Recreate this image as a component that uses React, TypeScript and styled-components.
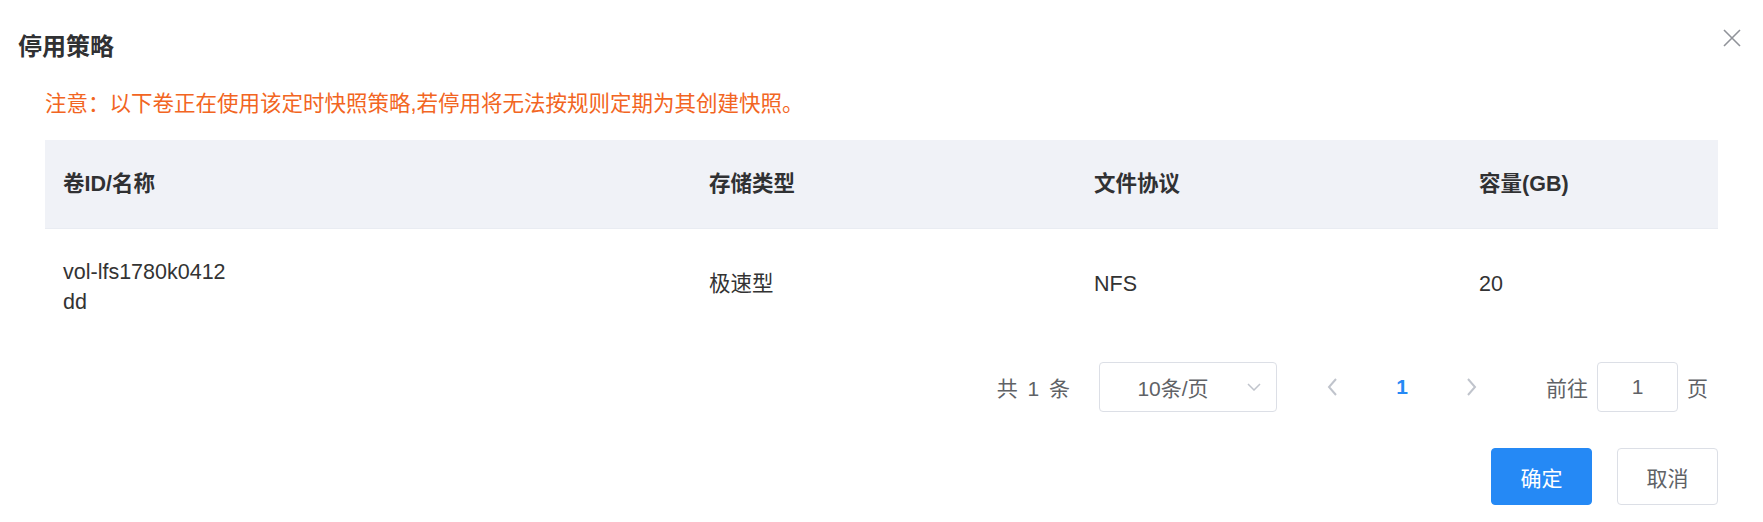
import styled, { createGlobalStyle } from "styled-components";

const GlobalStyle = createGlobalStyle`
  html, body {
    margin: 0;
    background: #fff;
  }
  body {
    font-family: "Liberation Sans", "Noto Sans CJK SC", sans-serif;
    color: #303133;
  }
`;

const Dialog = styled.div`
  position: relative;
  width: 1763px;
  height: 522px;
  box-sizing: border-box;
  background: #fff;
`;

const Header = styled.div`
  padding: 32px 18px 0;
`;

const Title = styled.h2`
  margin: 0;
  font-size: 24px;
  line-height: 30px;
  font-weight: bold;
  color: #303133;
`;

const CloseButton = styled.button`
  position: absolute;
  top: 29px;
  right: 22px;
  width: 18px;
  height: 18px;
  padding: 0;
  border: 0;
  background: none;
  cursor: pointer;
  display: flex;
`;

const Body = styled.div`
  padding: 0 45px;
`;

const Warning = styled.p`
  margin: 27px 0 0;
  font-size: 21.5px;
  line-height: 30px;
  color: #f26522;
`;

const Table = styled.div`
  margin-top: 21px;
`;

const Row = styled.div<{ $head?: boolean }>`
  display: grid;
  grid-template-columns: 646fr 385fr 385fr 257fr;
  align-items: center;
  height: ${(p) => (p.$head ? "88px" : "110px")};
  background: ${(p) => (p.$head ? "#f0f2f7" : "#fff")};
  border-bottom: ${(p) => (p.$head ? "1px solid #e9ecf2" : "none")};
  font-weight: ${(p) => (p.$head ? "bold" : "normal")};
  color: ${(p) => (p.$head ? "#303133" : "#333")};
`;

const Cell = styled.div<{ $multi?: boolean }>`
  padding: ${(p) => (p.$multi ? "5px 18px 0" : "0 18px")};
  font-size: 21.5px;
  line-height: 30px;
`;

const Pagination = styled.div`
  display: flex;
  justify-content: flex-end;
  align-items: center;
  height: 50px;
  margin-top: 23px;
  padding-right: 10px;
  font-size: 21px;
  color: #606266;
`;

const Total = styled.span`
  margin-right: 29px;
  word-spacing: 4px;
`;

const SizeSelect = styled.div`
  position: relative;
  display: flex;
  align-items: center;
  justify-content: center;
  width: 178px;
  height: 50px;
  box-sizing: border-box;
  padding-right: 30px;
  border: 1px solid #dcdfe6;
  border-radius: 4px;
  margin-right: 31px;
  color: #606266;
`;

const SelectArrow = styled.svg`
  position: absolute;
  right: 15px;
  top: 50%;
  margin-top: -4px;
`;

const Pager = styled.div`
  display: flex;
  gap: 22px;
`;

const PagerButton = styled.div<{ $active?: boolean }>`
  width: 48px;
  height: 50px;
  display: flex;
  align-items: center;
  justify-content: center;
  font-weight: bold;
  color: ${(p) => (p.$active ? "#2589f5" : "#c0c4cc")};
`;

const Jumper = styled.div`
  display: flex;
  align-items: center;
  gap: 9px;
  margin-left: 50px;
`;

const JumpInput = styled.div`
  width: 81px;
  height: 50px;
  box-sizing: border-box;
  border: 1px solid #dcdfe6;
  border-radius: 4px;
  display: flex;
  align-items: center;
  justify-content: center;
  color: #606266;
`;

const Footer = styled.div`
  display: flex;
  justify-content: flex-end;
  gap: 25px;
  margin-top: 36px;
`;

const Button = styled.button<{ $primary?: boolean }>`
  width: 101px;
  height: 57px;
  box-sizing: border-box;
  border-radius: 4px;
  border: 1px solid ${(p) => (p.$primary ? "#2589f5" : "#dcdfe6")};
  background: ${(p) => (p.$primary ? "#2589f5" : "#fff")};
  color: ${(p) => (p.$primary ? "#fff" : "#606266")};
  font-family: inherit;
  font-size: 21px;
  cursor: pointer;
`;

const Chevron = ({ dir }: { dir: "left" | "right" }) => (
  <svg width="12" height="20" viewBox="0 0 12 20">
    <polyline
      points={dir === "left" ? "10,2 3,10 10,18" : "2,2 9,10 2,18"}
      fill="none"
      stroke="#c0c4cc"
      strokeWidth="2"
    />
  </svg>
);

const columns = ["卷ID/名称", "存储类型", "文件协议", "容量(GB)"];

const rows = [
  { id: "vol-lfs1780k0412", name: "dd", type: "极速型", protocol: "NFS", size: "20" },
];

export default function App() {
  return (
    <Dialog>
      <GlobalStyle />
      <Header>
        <Title>停用策略</Title>
      </Header>
      <CloseButton aria-label="close">
        <svg width="18" height="18" viewBox="0 0 18 18">
          <path d="M1 1L17 17M17 1L1 17" stroke="#909399" strokeWidth="1.6" />
        </svg>
      </CloseButton>
      <Body>
        <Warning>注意：以下卷正在使用该定时快照策略,若停用将无法按规则定期为其创建快照。</Warning>
        <Table>
          <Row $head>
            {columns.map((c) => (
              <Cell key={c}>{c}</Cell>
            ))}
          </Row>
          {rows.map((r) => (
            <Row key={r.id}>
              <Cell $multi>
                {r.id}
                <br />
                {r.name}
              </Cell>
              <Cell>{r.type}</Cell>
              <Cell>{r.protocol}</Cell>
              <Cell>{r.size}</Cell>
            </Row>
          ))}
        </Table>
        <Pagination>
          <Total>共 1 条</Total>
          <SizeSelect>
            10条/页
            <SelectArrow width="14" height="8" viewBox="0 0 14 8">
              <polyline points="1,1 7,7 13,1" fill="none" stroke="#c0c4cc" strokeWidth="1.5" />
            </SelectArrow>
          </SizeSelect>
          <Pager>
            <PagerButton>
              <Chevron dir="left" />
            </PagerButton>
            <PagerButton $active>1</PagerButton>
            <PagerButton>
              <Chevron dir="right" />
            </PagerButton>
          </Pager>
          <Jumper>
            <span>前往</span>
            <JumpInput>1</JumpInput>
            <span>页</span>
          </Jumper>
        </Pagination>
        <Footer>
          <Button $primary>确定</Button>
          <Button>取消</Button>
        </Footer>
      </Body>
    </Dialog>
  );
}
